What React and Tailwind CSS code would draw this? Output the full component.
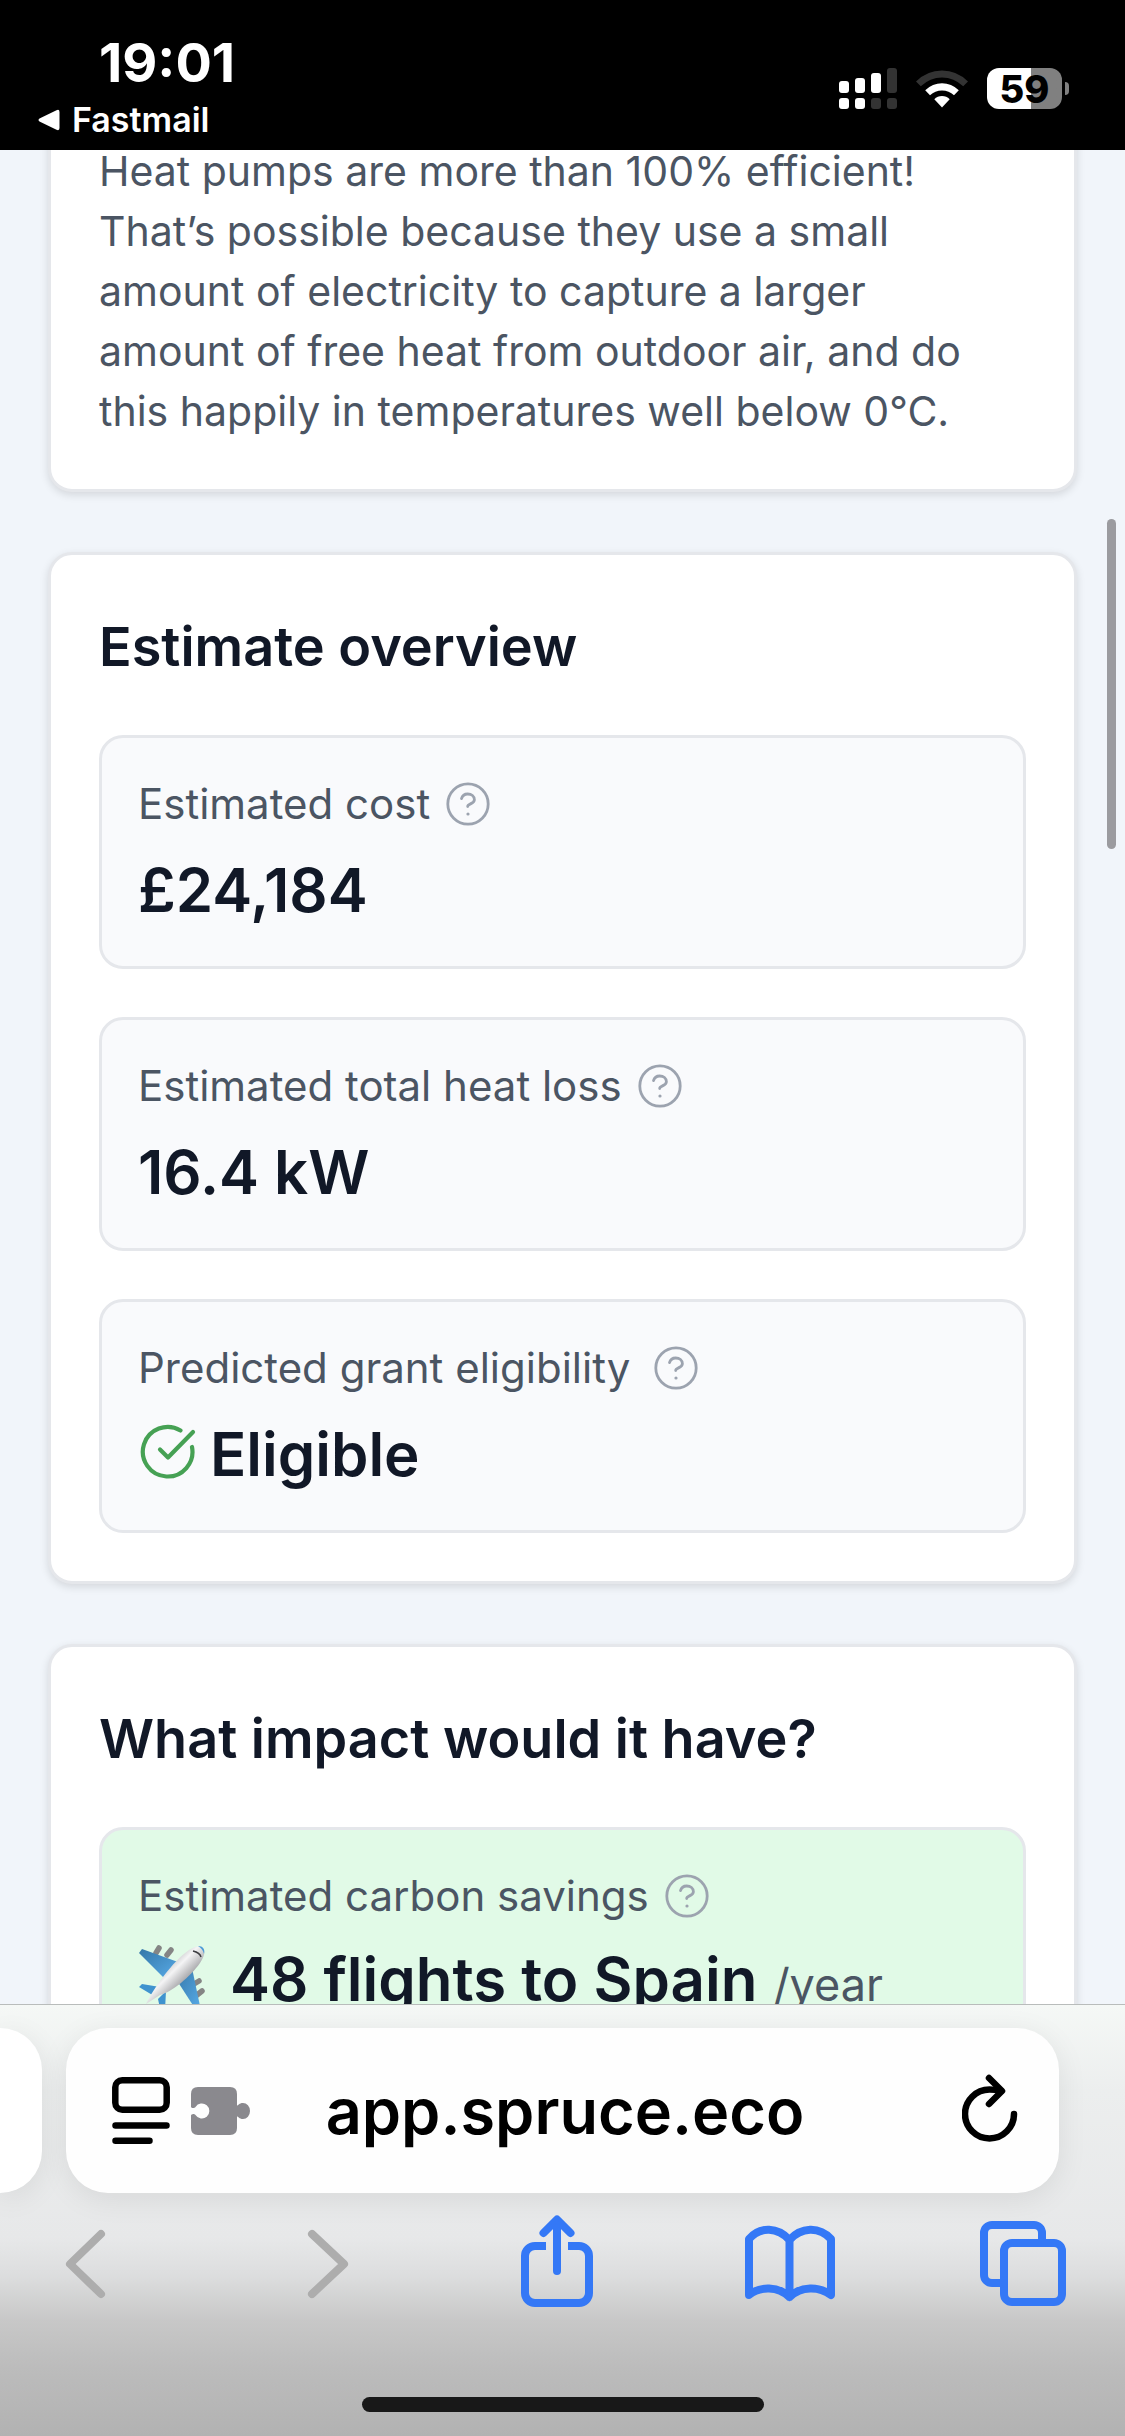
const HelpButton = ({ label }) => {
    return (
        <button type="button" aria-label={label} className="shrink-0 text-[#9ca3af]">
            <svg viewBox="0 0 44 44" className="size-11" fill="none" stroke="currentColor" strokeWidth="2.8" strokeLinecap="round" strokeLinejoin="round">
                <circle cx="22" cy="22" r="20.2" />
                <path d="M15.500 16.600c.8-2.900 3.200-4.600 6.200-4.600 3.800 0 6.700 2.300 6.700 5.700 0 4.200-6.700 4-6.700 6.800" />
                <circle cx="22" cy="32" r="1.600" fill="currentColor" stroke="none" />
            </svg>
        </button>
    );
};

const CheckIcon = () => (
    <svg viewBox="0 0 60 60" className="size-15 shrink-0" fill="none" stroke="#46a154" strokeWidth="4.200" strokeLinecap="round" strokeLinejoin="round">
        <path d="M42.500 8.500A24.800 24.800 0 1 0 54 25" />
        <path d="M22 27.500l8 8L55 10" />
    </svg>
);

const PlaneIcon = () => (
    <svg viewBox="0 0 72 72" className="size-[72px] shrink-0">
        <defs>
            <linearGradient id="body" x1="0" y1="0" x2="1" y2="1">
                <stop offset="0.300" stopColor="#b9b9bb" />
                <stop offset="0.450" stopColor="#f4f4f5" />
                <stop offset="0.700" stopColor="#8b8b8f" />
            </linearGradient>
            <linearGradient id="wing" x1="0" y1="0" x2="1" y2="1">
                <stop offset="0" stopColor="#3577a8" />
                <stop offset="1" stopColor="#58abe8" />
            </linearGradient>
        </defs>
        <g stroke="#858585" strokeWidth="5.500" strokeLinecap="round">
            <path d="M21 4l-3 5M33 6l-4 5M61 37l-5 3M64 47l-5 4" />
        </g>
        <path d="M1 9l3-4 36 13-14 16z" fill="url(#wing)" />
        <path d="M54 24l8 38-4 4-20-31z" fill="url(#wing)" />
        <path d="M1 43l3-3 18 3-6 9zM28 47l-1 19-4 3-3-14z" fill="#3f93cf" />
        <path d="M8 60C16 44 34 18 51 6c6-4 12-5 14-2 3 3 1 9-3 15C52 33 34 48 22 51z" fill="url(#body)" />
        <path d="M60 2c5 0 7 3 6 8-1-4-3-6-6-8z" fill="#4b9dd8" />
        <path d="M55 7c4 1 7 2 8 6" fill="none" stroke="#3c3c40" strokeWidth="1.500" />
    </svg>
);

const Card = ({ title, className = "", children }) => {
    return (
        <section className={`rounded-3xl border-3 border-[#e5e7eb] bg-white p-12 shadow-[0_3px_9px_rgba(0,0,0,0.12)] ${className}`}>
            {title && (
                <h2 className="mb-12 pt-1 text-[54px] font-semibold leading-[80px] text-[#111827]">{title}</h2>
            )}
            {children}
        </section>
    );
};

const Stat = ({ label, gap = "gap-4", tone = "bg-[#f9fafc]", icon, unit, children }) => {
    return (
        <div className={`rounded-3xl border-3 border-[#e5e7eb] p-9 ${tone}`}>
            <div className={`flex items-center text-[42px] leading-[60px] text-[#4b5563] ${gap}`}>
                <span>{label}</span>
                <HelpButton label={`About ${label.toLowerCase()}`} />
            </div>
            <div className="mt-3 flex h-21 items-center text-[#111827]">
                {icon}
                <p className="pt-1 text-[60px] font-semibold leading-[80px]">
                    {children}
                    {unit && <span className="ml-4 text-[45px] font-normal text-[#4b5563]">{unit}</span>}
                </p>
            </div>
        </div>
    );
};

const StatusBar = () => {
    return (
        <header className="flex h-[150px] shrink-0 justify-between bg-black text-white">
            <div className="pt-8">
                <div className="pl-[99px] text-[54px] font-bold leading-[62px]">19:01</div>
                <button type="button" className="flex items-center gap-3 pl-[38px] text-[34px] font-semibold leading-[52px]">
                    <svg viewBox="0 0 22 22" className="size-[22px]" fill="currentColor">
                        <path d="M1.500 9.500L18.500 1.200Q21.500 0 21.500 3v16q0 3-3 1.800L1.500 12.500Q-.5 11 1.500 9.500z" />
                    </svg>
                    Fastmail
                </button>
            </div>
            <div className="flex items-center gap-[19px] pr-14 pt-[27px]">
                <svg viewBox="0 0 58 41" className="h-[41px] w-[58px]" fill="#fff">
                    <rect x="0" y="13" width="10" height="12" rx="3" />
                    <rect x="16" y="10" width="10" height="15" rx="3" />
                    <rect x="32" y="5" width="10" height="20" rx="3" />
                    <rect x="48" y="0" width="10" height="25" rx="3" fill="#333" />
                    <rect x="0" y="30" width="10" height="11" rx="3" />
                    <rect x="16" y="30" width="10" height="11" rx="3" />
                    <rect x="32" y="30" width="10" height="11" rx="3" fill="#333" />
                    <rect x="48" y="30" width="10" height="11" rx="3" fill="#333" />
                </svg>
                <svg viewBox="0 0 52 38" className="h-[38px] w-[52px]">
                    <path d="M0 11.500Q11 .5 26 .5t26 11L47.200 16.300Q38 7.500 26 7.500T4.800 16.300z" fill="#333" />
                    <path d="M9.200 20.200Q16.500 13.200 26 13.200t16.800 7L38 25.300Q33 20.500 26 20.500T14 25.300z" fill="#fff" />
                    <path d="M18.300 29.300Q21.500 26 26 26t7.700 3.300L26 37.500z" fill="#fff" />
                </svg>
                <div className="flex items-center gap-[3px]">
                    <div className="flex h-[41px] w-[75px] items-center justify-center rounded-xl bg-linear-to-r from-white from-59% to-[#808080] to-59% text-[38px] font-extrabold leading-none text-black">
                        59
                    </div>
                    <div className="h-[13px] w-1 rounded-r-full bg-[#808080]" />
                </div>
            </div>
        </header>
    );
};

const AddressBar = () => {
    return (
        <div className="flex gap-6 pr-[66px] pt-[23px]">
            <div className="h-[165px] w-[42px] shrink-0 rounded-r-[42px] bg-white shadow-[0_6px_30px_rgba(0,0,0,0.08)]" />
            <div className="flex h-[165px] flex-1 items-center rounded-[42px] bg-[#fefefe] pl-[46px] pr-[41px] shadow-[0_6px_30px_rgba(0,0,0,0.08)]">
                <div className="flex flex-1 items-center gap-[21px]">
                    <button type="button" aria-label="Page menu">
                        <svg viewBox="0 0 58 67" className="h-[67px] w-[58px]" fill="none" stroke="#000" strokeWidth="6.500" strokeLinecap="round">
                            <rect x="3.300" y="3.300" width="51.400" height="29.400" rx="7" />
                            <path d="M3.500 48.500h51M3.500 63.700h34" />
                        </svg>
                    </button>
                    <button type="button" aria-label="Extensions">
                        <svg viewBox="0 0 59 48" className="h-12 w-[59px]" fill="#8a898e">
                            <path d="M7 0h32q7 0 7 7v11.500c1.500 0 2-2.500 6-2.500a7 8 0 0 1 0 16c-4 0-4.500-2.500-6-2.500V41q0 7-7 7H7q-7 0-7-7V28.500c0-1.500 3-2.500 4.500-.5a7.500 7.500 0 1 0 0-8C3 22 0 21 0 19.500V7q0-7 7-7z" />
                        </svg>
                    </button>
                </div>
                <button type="button" className="text-[63px] font-semibold leading-[84px] text-black">app.spruce.eco</button>
                <div className="flex flex-1 justify-end">
                    <button type="button" aria-label="Reload">
                        <svg viewBox="0 0 56 74" className="h-[74px] w-14" fill="none" stroke="#000" strokeWidth="6.500" strokeLinecap="round" strokeLinejoin="round">
                            <path d="M52 40A24.500 24.500 0 1 1 27.500 15.500Q33 15.500 39 17" />
                            <path d="M27 4l13 13-13 13" />
                        </svg>
                    </button>
                </div>
            </div>
        </div>
    );
};

const tools = [
    { name: "Back", tone: "text-[#adadad]", paths: ["M63 21L32 51L63 81"] },
    { name: "Forward", tone: "text-[#adadad]", paths: ["M40 21L72 51L40 81"] },
    {
        name: "Share",
        tone: "text-[#3478f6]",
        paths: ["M40 33H29a10 10 0 0 0-10 10V80a10 10 0 0 0 10 10H73a10 10 0 0 0 10-10V43a10 10 0 0 0-10-10H62", "M51 58V8M37.500 20L51 6.500L64.500 20"],
        cap: "butt",
    },
    {
        name: "Bookmarks",
        tone: "text-[#3478f6]",
        paths: ["M49.500 27C38 14 20 13 9 26V82C20 73 38 73 49.500 84C61 73 79 73 91 82V26C79 13 61 14 49.500 27V84"],
    },
    {
        name: "Tabs",
        tone: "text-[#3478f6]",
        paths: ["M26 70H18a8 8 0 0 1-8-8V20a8 8 0 0 1 8-8H60a8 8 0 0 1 8 8V26", "M38 30H80a8 8 0 0 1 8 8V81a8 8 0 0 1-8 8H38a8 8 0 0 1-8-8V38a8 8 0 0 1 8-8z"],
        cap: "butt",
    },
];

const BrowserBar = () => {
    return (
        <footer className="h-[432px] shrink-0 overflow-hidden border-t border-[#b9bcbb] bg-[linear-gradient(to_bottom,#f5f8f6_0%,#eceeee_20%,#e7e8e9_54%,#dcddde_63%,#c8c8c8_73%,#bcbcbc_84%,#b2b2b2_100%)]">
            <AddressBar />
            <nav className="mt-5 flex justify-between pl-[38px] pr-[55px]">
                {tools.map((tool) => (
                    <button key={tool.name} type="button" aria-label={tool.name} className={tool.tone}>
                        <svg viewBox="0 0 96 96" className="size-24" fill="none" stroke="currentColor" strokeWidth="8" strokeLinejoin="round">
                            {tool.paths.map((d, i) => (
                                <path key={d} d={d} strokeLinecap={i === 0 && tool.cap ? tool.cap : "round"} />
                            ))}
                        </svg>
                    </button>
                ))}
            </nav>
            <div className="mx-auto mt-[88px] h-[15px] w-[402px] rounded-full bg-[#181818]" />
        </footer>
    );
};

const App = () => {
    return (
        <div className="flex h-screen flex-col font-['Inter','Liberation_Sans',sans-serif]">
            <StatusBar />
            <main className="relative flex-1 overflow-hidden bg-[#f1f5fa] px-12">
                {/* page is scrolled, so the first card starts above the fold */}
                <Card className="-mt-15">
                    <p className="text-[41px] leading-[60px] text-[#4b5563]">
                        Heat pumps are more than 100% efficient!
                        <br />
                        That’s possible because they use a small
                        <br />
                        amount of electricity to capture a larger
                        <br />
                        amount of free heat from outdoor air, and do
                        <br />
                        this happily in temperatures well below 0°C.
                    </p>
                </Card>

                <Card title="Estimate overview" className="mt-15">
                    <div className="flex flex-col gap-12">
                        <Stat label="Estimated cost">£24,184</Stat>
                        <Stat label="Estimated total heat loss">16.4 kW</Stat>
                        <Stat label="Predicted grant eligibility" gap="gap-6" icon={<CheckIcon />}>
                            <span className="ml-3">Eligible</span>
                        </Stat>
                    </div>
                </Card>

                <Card title="What impact would it have?" className="mt-15">
                    <Stat label="Estimated carbon savings" tone="bg-[#e1fae7]" icon={<PlaneIcon />} unit="/year">
                        <span className="ml-5">48 flights to Spain</span>
                    </Stat>
                </Card>

                <div className="absolute right-[9px] top-[369px] h-[330px] w-[9px] rounded-full bg-[#9b9b9f]" />
            </main>
            <BrowserBar />
        </div>
    );
};

export default App;
